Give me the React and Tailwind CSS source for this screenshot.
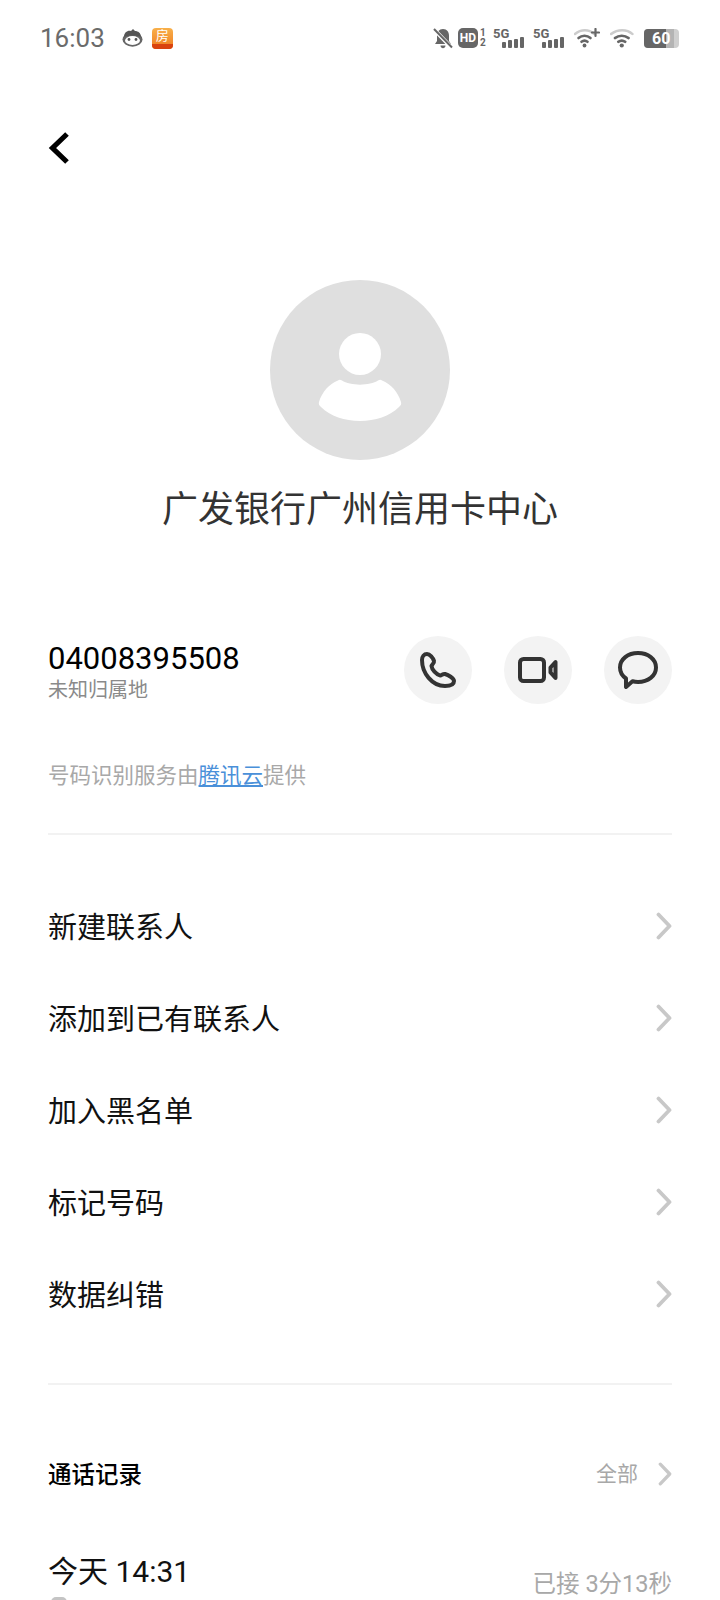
import React from 'react';

const SANS = "font-['Roboto','Noto_Sans_CJK_SC',sans-serif]";

const Chevron = ({ className }) => (
    <svg className={className} viewBox="0 0 16 28" fill="none" stroke="currentColor" strokeWidth="3.8" strokeLinecap="round" strokeLinejoin="round">
        <path d="M2.5 2.5 L13.5 14 L2.5 25.5" />
    </svg>
);

const Signal = () => (
    <div className="relative w-[33px] h-[20px]">
        <span className="absolute left-0 top-[-2px] text-[13px] leading-[15px] font-bold text-[#666]">5G</span>
        <div className="absolute left-[9px] bottom-0 flex items-end gap-[2px]">
            <div className="w-[4px] h-[6px] rounded-[1px] bg-[#666]" />
            <div className="w-[4px] h-[8px] rounded-[1px] bg-[#666]" />
            <div className="w-[4px] h-[9px] rounded-[1px] bg-[#666]" />
            <div className="w-[4px] h-[11px] rounded-[1px] bg-[#666]" />
        </div>
    </div>
);

const Wifi = ({ plus }) => (
    <svg className={plus ? 'w-[26px] h-[20px]' : 'w-[24px] h-[20px]'} viewBox={plus ? '0 0 26 20' : '0 0 24 20'} fill="none" strokeLinecap="round">
        <g transform={plus ? 'scale(1)' : 'scale(1.12 1)'}>
            <path d="M1 6 C7 1 15 1 20 6" stroke="#ccc" strokeWidth="2.4" />
            <path d="M4.5 10 C8 7 13 7 16.5 10" stroke="#666" strokeWidth="2.6" />
            <path d="M7.5 13.8 C9.5 12.2 11.5 12.2 13.5 13.8" stroke="#666" strokeWidth="2.6" />
            <circle cx="10.5" cy="17.5" r="1.9" fill="#666" />
        </g>
        {plus && <path d="M21.5 1 V8 M18 4.5 H25" stroke="#666" strokeWidth="2.2" />}
    </svg>
);

const StatusBar = () => (
    <div className="h-[76px] flex items-center justify-between pl-10 pr-[41px]">
        <div className="flex items-center">
            <span className="text-[26px] leading-none text-[#6b6b6b]">16:03</span>
            <svg className="w-[21px] h-[18px] ml-[17px]" viewBox="0 0 21 18">
                <ellipse cx="10.5" cy="10.5" rx="10" ry="7.2" fill="#666" />
                <path d="M2 8 C2 3 6 1 9 2 L11 0 L13 2 C16 2 19 4 19 8 C15 6 6 6 2 8Z" fill="#555" />
                <ellipse cx="10.5" cy="11.5" rx="7.5" ry="4.4" fill="#fff" />
                <circle cx="7" cy="10.5" r="1.4" fill="#555" />
                <circle cx="14" cy="10.5" r="1.4" fill="#555" />
            </svg>
            <div className="w-[21px] h-[21px] ml-[9px] rounded-[4px] bg-gradient-to-b from-[#f8b04a] to-[#ee7a1c] overflow-hidden flex flex-col items-center">
                <span className="text-[13px] leading-[16px] text-white">房</span>
                <div className="w-full h-[5px] bg-[#d9430f]" />
            </div>
        </div>
        <div className="flex items-center">
            <svg className="w-[20px] h-[21px]" viewBox="0 0 20 21" fill="none">
                <path d="M10 1 C14 1 16 4 16 8 V13 L18 16 H2 L4 13 V8 C4 4 6 1 10 1Z M7.5 17.5 H12.5 C12.5 21 7.5 21 7.5 17.5Z" fill="#666" />
                <path d="M1 1.5 L19 20" stroke="#fff" strokeWidth="4" />
                <path d="M1 1 L19 19.5" stroke="#666" strokeWidth="2" />
            </svg>
            <div className="ml-[5px] w-[20px] h-[20px] rounded-[5px] bg-[#666] text-white text-[12px] font-bold leading-[20px] text-center">HD</div>
            <div className="ml-[2px] w-[7px] text-[10px] leading-[10px] font-bold text-[#666] flex flex-col">
                <span>1</span>
                <span>2</span>
            </div>
            <div className="ml-[6px]"><Signal /></div>
            <div className="ml-[7px]"><Signal /></div>
            <div className="ml-[8px]"><Wifi plus /></div>
            <div className="ml-[10px]"><Wifi /></div>
            <div className="ml-[10px] relative w-[35px] h-[19px] rounded-[4px] bg-[#cfcfcf] overflow-hidden">
                <div className="absolute left-0 top-0 bottom-0 w-[22px] bg-[#666]" />
                <div className="absolute left-[22px] top-0 bottom-0 w-[8px] bg-[#b4b4b4]" />
                <span className="absolute inset-0 pl-[8px] text-[16px] leading-[19px] font-bold text-white">60</span>
            </div>
        </div>
    </div>
);

const ActionButton = ({ children }) => (
    <div className="w-[68px] h-[68px] rounded-full bg-[#f3f3f3] flex items-center justify-center">
        {children}
    </div>
);

const MENU = ['新建联系人', '添加到已有联系人', '加入黑名单', '标记号码', '数据纠错'];

const App = () => {
    return (
        <div className={`w-[720px] h-[1600px] overflow-hidden bg-white ${SANS}`}>
            <StatusBar />

            <div className="px-12">
                <svg className="mt-[56px] w-[22px] h-[32px]" viewBox="0 0 22 32" fill="none" stroke="#000" strokeWidth="5.2">
                    <path d="M19 2 L4.5 16 L19 30" />
                </svg>
            </div>

            <div className="mt-[116px] flex justify-center">
                <div className="w-[180px] h-[180px] rounded-full bg-[#dfdfdf] flex items-center justify-center">
                    <svg className="w-[84px] h-[88px] mt-[14px]" viewBox="0 0 84 88" fill="#fff">
                        <circle cx="42" cy="21" r="21" />
                        <path d="M20 47.5 C21 46.5 22.5 46.5 24 47.5 C32 53 52 53 60 47.5 C61.5 46.5 63 46.5 64 47.5 C73 51 80 59 83 69 C83.5 71 83 72.5 81 74 C72 83 57 88 42 88 C27 88 12 83 3 74 C1 72.5 0.5 71 1 69 C4 59 11 51 20 47.5Z" />
                    </svg>
                </div>
            </div>

            <div className="mt-[25px] text-center text-[36px] leading-[50px] text-[#333]">广发银行广州信用卡中心</div>

            <div className="mt-[101px] px-12 flex items-start justify-between">
                <div>
                    <div className="text-[31px] leading-[46px] text-black">04008395508</div>
                    <div className="text-[20px] leading-[16px] text-[#8a8a8a]">未知归属地</div>
                </div>
                <div className="flex gap-8">
                    <ActionButton>
                        <svg className="w-[36px] h-[36px]" viewBox="0 0 36 36" fill="none" stroke="#333" strokeWidth="4" strokeLinejoin="round">
                            <path d="M7 2 C10 2 13 6 14 9 C14.5 11 12 12.5 11.5 14 C12 18 16 22 20 23.5 C22 23 23 21.5 25 22 C28 23 34 26 34 29 C34 33 29 34 25 34 C12 34 2 21 2 8 C2 4.5 4 2 7 2Z" />
                        </svg>
                    </ActionButton>
                    <ActionButton>
                        <svg className="w-[40px] h-[26px]" viewBox="0 0 40 26" fill="none" stroke="#333" strokeWidth="4" strokeLinejoin="round">
                            <rect x="2" y="2" width="24" height="22" rx="3.5" />
                            <path d="M37.5 5 V21 L32.5 15.5 V10.5 Z" />
                        </svg>
                    </ActionButton>
                    <ActionButton>
                        <svg className="w-[40px] h-[38px]" viewBox="0 0 40 38" fill="none" stroke="#333" strokeWidth="4" strokeLinejoin="round">
                            <path d="M20 2 C30 2 38 8 38 16.5 C38 25 30 31 20 31 C18 31 16 30.7 14.5 30.3 L8 36 L8 27.5 C4.5 25 2 21 2 16.5 C2 8 10 2 20 2Z" />
                        </svg>
                    </ActionButton>
                </div>
            </div>

            <div className="mt-[57px] px-12 text-[21.5px] leading-[30px] text-[#a8a8a8]">
                号码识别服务由<span className="text-[#4a90d9] underline underline-offset-2">腾讯云</span>提供
            </div>

            <div className="mt-[42px] mx-12 h-[2px] bg-[#f2f2f2]" />

            <div className="mt-[45px] px-12">
                {MENU.map(item => (
                    <div key={item} className="h-[92px] flex items-center justify-between">
                        <span className="pt-[5px] text-[29px] text-[#111]">{item}</span>
                        <Chevron className="w-[16px] h-[28px] text-[#c8c8c8]" />
                    </div>
                ))}
            </div>

            <div className="mt-[43px] mx-12 h-[2px] bg-[#f2f2f2]" />

            <div className="mt-[69px] px-12 h-[40px] flex items-center justify-between">
                <span className="pt-[4px] text-[23.5px] font-medium text-black">通话记录</span>
                <div className="flex items-center">
                    <span className="pt-[2px] text-[21px] text-[#a8a8a8]">全部</span>
                    <Chevron className="ml-[20px] w-[14px] h-[24px] text-[#c8c8c8]" />
                </div>
            </div>

            <div className="mt-[56px] px-12 flex items-start justify-between">
                <div>
                    <div className="text-[30px] leading-[44px] text-[#111]">今天 14:31</div>
                    <div className="mt-[3px] w-[16px] h-[16px] ml-[3px] rounded-[5px] bg-[#c4c4c4]" />
                </div>
                <span className="mt-[17px] text-[23.5px] leading-[34px] text-[#a8a8a8]">已接 3分13秒</span>
            </div>
        </div>
    );
};

export default App;
